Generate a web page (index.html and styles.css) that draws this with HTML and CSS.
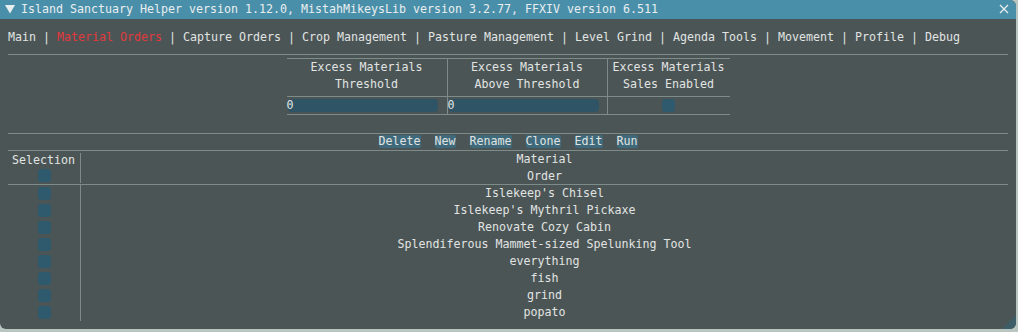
FILE: index.html
```html
<!DOCTYPE html>
<html lang="en">
<head>
  <meta charset="UTF-8">
  <title>Island Sanctuary Helper</title>
  <link rel="stylesheet" href="styles.css">
</head>
<body>
  <div class="window">
    <!-- 标题栏 -->
    <div class="title-bar">
      <svg class="collapse" width="10" height="9" viewBox="0 0 10 9"><polygon points="0,0 10,0 5,8.5" fill="#e8eef0"/></svg>
      <span class="title-text">Island Sanctuary Helper version 1.12.0, MistahMikeysLib version 3.2.77, FFXIV version 6.511</span>
      <svg class="close" width="10" height="10" viewBox="0 0 10 10"><path d="M1 1 L9 9 M9 1 L1 9" stroke="#e8eef0" stroke-width="1.3"/></svg>
    </div>

    <div class="content">
      <!-- 标签页 -->
      <div class="tabs"><span>Main</span> | <span class="active">Material Orders</span> | <span>Capture Orders</span> | <span>Crop Management</span> | <span>Pasture Management</span> | <span>Level Grind</span> | <span>Agenda Tools</span> | <span>Movement</span> | <span>Profile</span> | <span>Debug</span></div>
      <div class="separator"></div>

      <!-- 设置表格 -->
      <div class="settings">
        <div class="settings-row head">
          <div class="cell">Excess Materials<br>Threshold</div>
          <div class="cell">Excess Materials<br>Above Threshold</div>
          <div class="cell">Excess Materials<br>Sales Enabled</div>
        </div>
        <div class="settings-row inputs">
          <div class="cell"><div class="slider"><span>0</span></div></div>
          <div class="cell"><div class="slider"><span>0</span></div></div>
          <div class="cell"><div class="checkbox"></div></div>
        </div>
      </div>

      <!-- 按钮 -->
      <div class="toolbar">
        <span class="btn">Delete</span>
        <span class="btn">New</span>
        <span class="btn">Rename</span>
        <span class="btn">Clone</span>
        <span class="btn">Edit</span>
        <span class="btn">Run</span>
      </div>

      <!-- 订单列表 -->
      <div class="orders">
        <div class="orders-head">
          <div class="sel-col">
            <div class="line">Selection</div>
            <div class="line"><div class="checkbox"></div></div>
          </div>
          <div class="name-col">
            <div class="line">Material</div>
            <div class="line">Order</div>
          </div>
        </div>
        <div class="orders-body">
          <div class="sel-col" id="sel-col"></div>
          <div class="name-col" id="name-col"></div>
        </div>
      </div>
    </div>
    <div class="grip"></div>
  </div>

  <script>
    const orders = [
      "Islekeep's Chisel",
      "Islekeep's Mythril Pickaxe",
      "Renovate Cozy Cabin",
      "Splendiferous Mammet-sized Spelunking Tool",
      "everything",
      "fish",
      "grind",
      "popato"
    ];
    const selCol = document.getElementById('sel-col');
    const nameCol = document.getElementById('name-col');
    orders.forEach(name => {
      const sel = document.createElement('div');
      sel.className = 'line';
      sel.innerHTML = '<div class="checkbox"></div>';
      selCol.appendChild(sel);

      const row = document.createElement('div');
      row.className = 'line';
      row.textContent = name;
      nameCol.appendChild(row);
    });
  </script>
</body>
</html>
```

FILE: styles.css
```css
/* 全局样式 */
body {
  margin: 0;
  padding: 0;
  background-color: #b8c5c1;
  font-family: "DejaVu Sans Mono", monospace;
  font-size: 11.63px;
  color: #e1e4e2;
}

.window {
  position: relative;
  width: 1016px;
  height: 329px;
  background-color: #4b5556;
  border-radius: 0 6px 6px 6px;
  overflow: hidden;
}

/* 标题栏 */
.title-bar {
  height: 19px;
  background-color: #4a8fa9;
  display: flex;
  align-items: center;
  color: #e8eef0;
  line-height: 19px;
}
.collapse {
  margin-left: 5px;
  margin-right: 6px;
}
.title-text {
  flex: 1;
  white-space: pre;
}
.close {
  margin-right: 7px;
  margin-top: -1px;
}

/* 主要内容 */
.content {
  padding: 10px 8px 0 8px;
}
.tabs {
  line-height: 17px;
  height: 17px;
  white-space: pre;
}
.tabs .active {
  color: #e3383c;
}
.separator {
  margin-top: 8px;
  height: 1px;
  background-color: #7e8c89;
}

/* 设置表格 */
.settings {
  width: 443px;
  margin: 3px auto 0;
  border-top: 1px solid #7e8c89;
}
.settings-row {
  display: grid;
  grid-template-columns: 160px 160px 123px;
  border-bottom: 1px solid #7e8c89;
}
.settings-row .cell {
  text-align: center;
  line-height: 17px;
}
.settings-row .cell + .cell {
  border-left: 1px solid #7e8c89;
}
.settings-row.head .cell {
  height: 37px;
}
.settings-row.inputs .cell {
  height: 17px;
  display: flex;
  align-items: center;
}
.slider {
  width: 150px;
  height: 13px;
  margin-left: 1px;
  background-color: #2f5466;
  border-radius: 4px;
  text-align: left;
  line-height: 13px;
}
.slider span {
  margin-left: -1px;
}
.settings-row.inputs .cell:last-child {
  justify-content: center;
}
.checkbox {
  width: 13px;
  height: 13px;
  background-color: #2f5a6d;
  border-radius: 3px;
}

/* 按钮 */
.toolbar {
  margin-top: 18px;
  border-top: 1px solid #7e8c89;
  border-bottom: 1px solid #7e8c89;
  height: 16px;
  display: flex;
  justify-content: center;
  align-items: flex-start;
  gap: 14px;
}
.btn {
  margin-top: 1px;
  height: 13px;
  line-height: 13px;
  background-color: #3e6a7c;
  border-radius: 2px;
}

/* 订单列表 */
.orders-head,
.orders-body {
  display: flex;
}
.orders-head {
  height: 33px;
  overflow: hidden;
  border-bottom: 1px solid #7e8c89;
}
.sel-col {
  width: 72px;
  flex-shrink: 0;
  border-right: 1px solid #7e8c89;
}
.orders-head .sel-col {
  margin: 2px 0 1px;
}
.name-col {
  flex: 1;
  text-align: center;
}
.line {
  height: 17px;
  line-height: 17px;
}
.orders-head .name-col .line:last-child {
  height: 16px;
  line-height: 16px;
}
.sel-col .line {
  display: flex;
  align-items: center;
  justify-content: center;
}
.orders-head .sel-col .line:first-child {
  justify-content: flex-start;
  padding-left: 4px;
  line-height: 14px;
  height: 14px;
}
.orders-head .sel-col .line:last-child {
  height: 16px;
}

/* 缩放角 */
.grip {
  position: absolute;
  right: 0;
  bottom: 0;
  width: 0;
  height: 0;
  border-left: 14px solid transparent;
  border-bottom: 14px solid #3d5d68;
}
```
